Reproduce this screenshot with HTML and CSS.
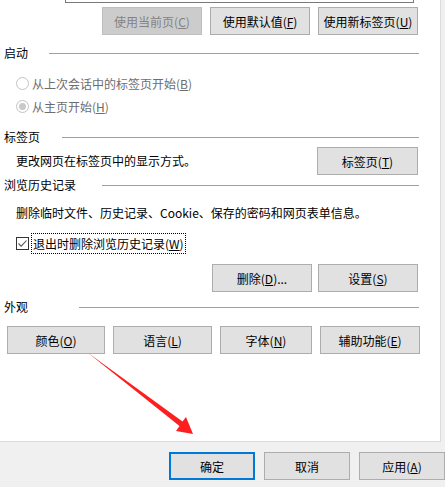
FILE: index.html
```html
<!DOCTYPE html>
<html>
<head>
    <title>Internet 选项</title>
    <link rel="stylesheet" href="styles.css">
</head>
<body>

<div class="options-panel">
    <!-- 主页地址框（上半部分被裁掉） -->
    <div class="home-box"></div>
    <div class="btn-row btn-row-right">
        <button class="win-btn btn-disabled">使用当前页(<u>C</u>)</button>
        <button class="win-btn">使用默认值(<u>F</u>)</button>
        <button class="win-btn">使用新标签页(<u>U</u>)</button>
    </div>

    <!-- 启动 -->
    <div class="group-head group-startup">
        <span class="group-title">启动</span>
        <span class="group-line"></span>
    </div>
    <div class="radio-row radio-disabled">
        <span class="radio"></span>
        <span>从上次会话中的标签页开始(<u>B</u>)</span>
    </div>
    <div class="radio-row radio-disabled">
        <span class="radio radio-on"></span>
        <span>从主页开始(<u>H</u>)</span>
    </div>

    <!-- 标签页 -->
    <div class="group-head group-tabs">
        <span class="group-title">标签页</span>
        <span class="group-line"></span>
    </div>
    <div class="tab-row">
        <span class="desc">更改网页在标签页中的显示方式。</span>
        <button class="win-btn btn-tabs">标签页(<u>T</u>)</button>
    </div>

    <!-- 浏览历史记录 -->
    <div class="group-head group-history">
        <span class="group-title">浏览历史记录</span>
        <span class="group-line"></span>
    </div>
    <div class="desc history-desc">删除临时文件、历史记录、Cookie、保存的密码和网页表单信息。</div>
    <div class="check-row">
        <span class="checkbox">
            <svg width="11" height="11" viewBox="0 0 11 11"><path d="M1.5 5.5 L4.2 8.2 L9.5 2.5" fill="none" stroke="#555" stroke-width="1.1"/></svg>
        </span>
        <span class="check-label">退出时删除浏览历史记录(<u>W</u>)</span>
    </div>
    <div class="btn-row btn-row-right history-btns">
        <button class="win-btn">删除(<u>D</u>)...</button>
        <button class="win-btn">设置(<u>S</u>)</button>
    </div>

    <!-- 外观 -->
    <div class="group-head group-look">
        <span class="group-title">外观</span>
        <span class="group-line"></span>
    </div>
    <div class="btn-row look-btns">
        <button class="win-btn btn-color">颜色(<u>O</u>)</button>
        <button class="win-btn btn-lang">语言(<u>L</u>)</button>
        <button class="win-btn btn-font">字体(<u>N</u>)</button>
        <button class="win-btn btn-access">辅助功能(<u>E</u>)</button>
    </div>
</div>

<div class="dialog-footer">
    <button class="win-btn foot-btn btn-default">确定</button>
    <button class="win-btn foot-btn">取消</button>
    <button class="win-btn foot-btn">应用(<u>A</u>)</button>
</div>

<!-- 红色标注箭头 -->
<svg class="mark-arrow" width="445" height="487" viewBox="0 0 445 487">
    <polygon points="87.5,352.5 182.5,421.5 186,417 193,434 176,431 179.5,426" fill="#fb1f1f"/>
</svg>

</body>
</html>
```

FILE: styles.css
```css
body {
    margin: 0;
    background: #f0f0f0;
    font-family: "Noto Sans CJK SC", "Microsoft YaHei", sans-serif;
    font-size: 12px;
    color: #000;
}

.options-panel {
    box-sizing: border-box;
    width: 441px;
    height: 442px;
    background: #fff;
    border-right: 1px solid #dcdcdc;
    border-bottom: 1px solid #dcdcdc;
}

.home-box {
    width: 347px;
    height: 2px;
    margin-left: 65px;
    border: 1px solid #7a7a7a;
    border-top: none;
}

.win-btn {
    box-sizing: border-box;
    height: 28px;
    width: 100px;
    padding: 0;
    background: #e1e1e1;
    border: 1px solid #adadad;
    font-family: inherit;
    font-size: 12px;
    color: #000;
}

.win-btn u {
    text-underline-offset: 1px;
}

.btn-disabled {
    background: #cccccc;
    border-color: #bfbfbf;
    color: #838383;
}

.btn-row {
    display: flex;
    gap: 8px;
}

.btn-row-right {
    justify-content: flex-end;
    padding-right: 22px;
    margin-top: 4px;
}

/* group headings with a rule */
.group-head {
    display: flex;
    align-items: center;
    height: 16px;
    line-height: 16px;
    padding-left: 4px;
    padding-right: 21px;
}

.group-line {
    flex: 1;
    height: 1px;
    background: #a0a0a0;
}

.group-startup {
    margin-top: 10px;
}
.group-startup .group-title { width: 45px; }

.group-tabs {
    margin-top: 11px;
}
.group-tabs .group-title { width: 58px; }

.group-history {
    margin-top: 2px;
}
.group-history .group-title { width: 98px; }

.group-look {
    margin-top: 7px;
}
.group-look .group-title { width: 75px; }

.radio-row {
    display: flex;
    align-items: center;
    height: 23px;
    padding-left: 16px;
    gap: 3px;
}

.radio-row:first-of-type {
    margin-top: 0;
}

.group-startup + .radio-row {
    margin-top: 11px;
}

.radio-disabled {
    color: #6d6d6d;
}

.radio {
    box-sizing: border-box;
    width: 13px;
    height: 13px;
    border: 1px solid #c3c3c3;
    border-radius: 50%;
    display: flex;
    align-items: center;
    justify-content: center;
}

.radio-on::after {
    content: "";
    width: 7px;
    height: 7px;
    border-radius: 50%;
    background: #c9c9c9;
}

.desc {
    line-height: 16px;
}

.tab-row {
    display: flex;
    align-items: center;
    justify-content: space-between;
    padding-left: 16px;
    padding-right: 22px;
    margin-top: 2px;
}

.btn-tabs {
    width: 101px;
}

.history-desc {
    padding-left: 16px;
    margin-top: 12px;
}

.check-row {
    display: flex;
    align-items: center;
    height: 22px;
    padding-left: 16px;
    margin-top: 11px;
    gap: 3px;
}

.checkbox {
    box-sizing: border-box;
    width: 13px;
    height: 13px;
    border: 1px solid #333;
    display: flex;
    align-items: center;
    justify-content: center;
}

.check-label {
    line-height: 19px;
    outline: 1px dotted #000;
    padding: 0 1px;
}

.history-btns {
    gap: 6px;
    margin-top: 10px;
}

.look-btns {
    padding-left: 7px;
    margin-top: 11px;
}

.btn-color { width: 98px; }
.btn-lang { width: 99px; }
.btn-font { width: 92px; }
.btn-access { width: 100px; }

.dialog-footer {
    display: flex;
    justify-content: flex-end;
    gap: 9px;
    padding-top: 10px;
}

.foot-btn {
    width: 86px;
}

.btn-default {
    border: 2px solid #0078d7;
}

.mark-arrow {
    position: absolute;
    left: 0;
    top: 0;
    pointer-events: none;
}
```
